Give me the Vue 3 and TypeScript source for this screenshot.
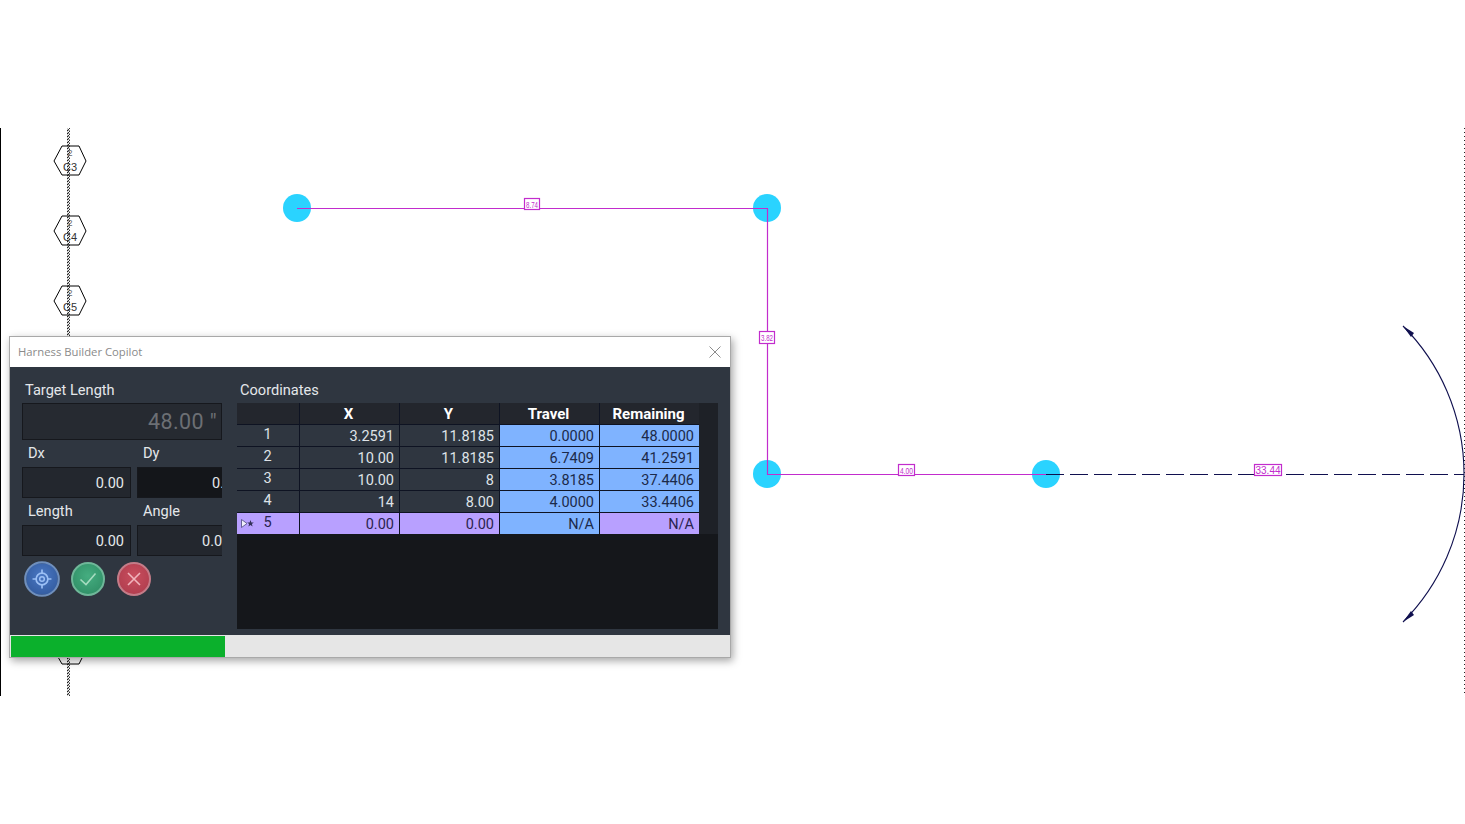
<script setup lang="ts">
interface Row { id: number; x: string; y: string; travel: string; remaining: string; active?: boolean }
const rows: Row[] = [
  { id: 1, x: '3.2591', y: '11.8185', travel: '0.0000', remaining: '48.0000' },
  { id: 2, x: '10.00', y: '11.8185', travel: '6.7409', remaining: '41.2591' },
  { id: 3, x: '10.00', y: '8', travel: '3.8185', remaining: '37.4406' },
  { id: 4, x: '14', y: '8.00', travel: '4.0000', remaining: '33.4406' },
  { id: 5, x: '0.00', y: '0.00', travel: 'N/A', remaining: 'N/A', active: true },
]
const hexes = [
  { cy: 161, label: 'C3' },
  { cy: 231, label: 'C4' },
  { cy: 301, label: 'C5' },
  { cy: 650, label: '' },
]
const hexPoints = (cy: number) =>
  `54,${cy} 62,${cy - 15} 79,${cy - 15} 86,${cy} 79,${cy + 14} 62,${cy + 14}`
const nodes = [
  { cx: 297, cy: 208 },
  { cx: 767, cy: 208 },
  { cx: 767, cy: 474 },
  { cx: 1046, cy: 474 },
]
const tags = [
  { x: 524.5, y: 198.5, w: 15, h: 11, t: '8.74', tx: 532, ty: 207.5, fs: 9, len: 12 },
  { x: 759.5, y: 331.5, w: 15, h: 12, t: '3.82', tx: 767, ty: 341, fs: 9, len: 12 },
  { x: 898.5, y: 464.5, w: 16, h: 11, t: '4.00', tx: 906.5, ty: 473.5, fs: 9, len: 13 },
  { x: 1254.5, y: 464.5, w: 27, h: 11, t: '33.44', tx: 1268, ty: 474, fs: 10, len: 25 },
]
</script>

<template>
  <div class="page">
    <svg class="drawing" width="1465" height="824" viewBox="0 0 1465 824">
      <defs>
        <pattern id="hatch" width="3" height="3" patternUnits="userSpaceOnUse">
          <path d="M0 2.7 L3 0.3" stroke="#111" stroke-width="1.1" />
        </pattern>
      </defs>
      <line x1="0.5" y1="128" x2="0.5" y2="696" stroke="#000" stroke-width="1" />
      <line x1="1464.5" y1="128" x2="1464.5" y2="694" stroke="#222" stroke-width="1" stroke-dasharray="1 3" />
      <rect x="67" y="128" width="3" height="568" fill="url(#hatch)" />
      <g v-for="h in hexes" :key="h.cy">
        <polygon :points="hexPoints(h.cy)" fill="none" stroke="#000" stroke-width="1" />
        <template v-if="h.label">
          <text x="70" :y="h.cy - 5" class="hex-mini">2</text>
          <text x="70" :y="h.cy + 10" class="hex-label">{{ h.label }}</text>
        </template>
      </g>

      <circle v-for="n in nodes" :key="n.cx + '-' + n.cy" :cx="n.cx" :cy="n.cy" r="14" fill="#2ad3ff" />
      <path d="M297 208.5 H767.5 V474.5 H1046" fill="none" stroke="#c22ccd" stroke-width="1.2" />
      <line x1="1046" y1="474.5" x2="1464" y2="474.5" stroke="#10104f" stroke-width="1.1" stroke-dasharray="18 6" />
      <path d="M1403 326 A210 210 0 0 1 1403 622" fill="none" stroke="#10104f" stroke-width="1.1" />
      <path d="M1403 326 L1414 333 L1411 337 Z" fill="#10104f" />
      <path d="M1403 622 L1414 615 L1411 611 Z" fill="#10104f" />

      <g v-for="tag in tags" :key="tag.t">
        <rect :x="tag.x" :y="tag.y" :width="tag.w" :height="tag.h" fill="#fff" stroke="#c22ccd" stroke-width="1.2" />
        <text
          :x="tag.tx"
          :y="tag.ty"
          :font-size="tag.fs"
          :textLength="tag.len"
          lengthAdjust="spacingAndGlyphs"
          class="tag-text"
        >{{ tag.t }}</text>
      </g>
    </svg>

    <section class="dialog">
      <header class="titlebar">
        <span class="title">Harness Builder Copilot</span>
        <svg class="close" width="12" height="12" viewBox="0 0 12 12">
          <path d="M0.5 0.5 L11.5 11.5 M11.5 0.5 L0.5 11.5" stroke="#8c8c8c" stroke-width="1" fill="none" />
        </svg>
      </header>

      <div class="body">
        <div class="left">
          <div class="label first">Target Length</div>
          <div class="target">48.00 "</div>
          <div class="fields">
            <div class="label">Dx</div>
            <div class="label">Dy</div>
            <div class="field">0.00</div>
            <div class="field focus clip-dy">0.00</div>
            <div class="label">Length</div>
            <div class="label">Angle</div>
            <div class="field">0.00</div>
            <div class="field clip-angle">0.00</div>
          </div>
          <div class="buttons">
            <button class="round blue" type="button" aria-label="Locate">
              <svg width="20" height="20" viewBox="0 0 20 20" fill="none" stroke="#9cc0f5">
                <circle cx="10" cy="10" r="5.6" stroke-width="1.6" />
                <circle cx="10" cy="10" r="2.2" stroke-width="1.4" />
                <path d="M10 1 V4.5 M10 15.5 V19 M1 10 H4.5 M15.5 10 H19" stroke-width="1.6" />
              </svg>
            </button>
            <button class="round green" type="button" aria-label="Accept">
              <svg width="20" height="20" viewBox="0 0 20 20" fill="none" stroke="#a6dcc0" stroke-width="1.6">
                <path d="M2.5 10.5 L8 15.5 L17.5 4.5" />
              </svg>
            </button>
            <button class="round red" type="button" aria-label="Cancel">
              <svg width="20" height="20" viewBox="0 0 20 20" fill="none" stroke="#f0b4bc" stroke-width="1.6">
                <path d="M4 4 L16 16 M16 4 L4 16" />
              </svg>
            </button>
          </div>
        </div>

        <div class="right">
          <div class="label first">Coordinates</div>
          <div class="table-wrap">
            <div class="grid">
              <div class="cell head"></div>
              <div class="cell head">X</div>
              <div class="cell head">Y</div>
              <div class="cell head">Travel</div>
              <div class="cell head">Remaining</div>
              <template v-for="r in rows" :key="r.id">
                <div class="cell rowhead" :class="{ active: r.active }">
                  <svg v-if="r.active" class="marker" width="13" height="9" viewBox="0 0 13 9">
                    <path d="M0.5 0.5 L6 4.5 L0.5 8.5 Z" fill="#f1f0fb" stroke="#4b4680" stroke-width="0.8" />
                    <path d="M9.5 1 L10.4 3.4 L12.8 3.4 L10.9 5 L11.6 7.6 L9.5 6 L7.4 7.6 L8.1 5 L6.2 3.4 L8.6 3.4 Z" fill="#33305a" />
                  </svg>
                  {{ r.id }}
                </div>
                <div class="cell num" :class="{ active: r.active }">{{ r.x }}</div>
                <div class="cell num" :class="{ active: r.active }">{{ r.y }}</div>
                <div class="cell num calc">{{ r.travel }}</div>
                <div class="cell num calc" :class="{ active: r.active }">{{ r.remaining }}</div>
              </template>
            </div>
            <div class="gutter"></div>
          </div>
        </div>
      </div>

      <div class="progress"><div class="bar" style="width: 214px"></div></div>
    </section>
  </div>
</template>

<style>
html, body { margin: 0; background: #fff; }
</style>

<style scoped>
.page {
  position: relative;
  width: 1465px;
  height: 824px;
  overflow: hidden;
  background: #fff;
  font-family: Roboto, "Liberation Sans", sans-serif;
}
.drawing { display: block; }
.hex-mini {
  font-family: "Liberation Sans", sans-serif;
  font-size: 9px;
  fill: #666;
  text-anchor: middle;
}
.hex-label {
  font-family: "Liberation Sans", sans-serif;
  font-size: 11px;
  fill: #333;
  text-anchor: middle;
}
.tag-text {
  font-family: "Liberation Sans", sans-serif;
  fill: #c22ccd;
  text-anchor: middle;
}
.dialog {
  position: absolute;
  left: 9px;
  top: 336px;
  width: 722px;
  height: 322px;
  box-sizing: border-box;
  border: 1px solid #a9a9a9;
  box-shadow: 2px 3px 8px rgba(0, 0, 0, 0.35);
  display: flex;
  flex-direction: column;
  background: #fff;
}
.titlebar {
  height: 30px;
  flex: none;
  display: flex;
  align-items: center;
  justify-content: space-between;
  padding: 0 9px 0 8px;
  background: #fff;
}
.title {
  font-family: "Open Sans", sans-serif;
  font-size: 11.3px;
  line-height: 30px;
  height: 30px;
  color: #8a8a8a;
}
.body {
  flex: 1;
  min-height: 0;
  display: flex;
  gap: 15px;
  padding: 13px 12px 6px;
  background: #2f3640;
}
.left { width: 200px; flex: none; display: flex; flex-direction: column; }
.right { flex: 1; min-width: 0; display: flex; flex-direction: column; }
.label {
  font-size: 14.6px;
  color: #e4e7ea;
  padding: 5px 0 0 6px;
  height: 27px;
  box-sizing: border-box;
  line-height: 17px;
}
.label.first { height: 23px; padding: 2px 0 0 3px; }
.target {
  height: 37px;
  box-sizing: border-box;
  background: #262a31;
  border: 1px solid #16181d;
  color: #6c6f74;
  font-size: 21.5px;
  text-align: right;
  line-height: 35px;
  padding-right: 4px;
  letter-spacing: 0.4px;
}
.fields {
  display: grid;
  grid-template-columns: 109px 85px;
  column-gap: 6px;
  grid-auto-rows: auto;
}
.field {
  height: 31px;
  box-sizing: border-box;
  background: #23272e;
  border: 1px solid #16181d;
  color: #e4e7ea;
  font-size: 14.5px;
  line-height: 31px;
  text-align: right;
  padding-right: 6px;
  white-space: nowrap;
  overflow: hidden;
}
.field.focus { background: #14161a; }
.clip-dy { text-align: left; padding: 0 0 0 74px; border-right: 0; }
.clip-angle { text-align: left; padding: 0 0 0 64px; border-right: 0; }
.buttons {
  display: flex;
  gap: 12px;
  margin-top: 6px;
  padding-left: 3px;
}
.round {
  width: 34px;
  height: 34px;
  padding: 0;
  border-radius: 50%;
  display: flex;
  align-items: center;
  justify-content: center;
  box-sizing: border-box;
  border-width: 2px;
  border-style: solid;
  filter: blur(0.4px);
}
.blue {
  background: radial-gradient(circle at 50% 40%, #4a78c4, #2e5596);
  border-color: #6f8fbc;
  transform: scale(1.05);
}
.green { background: radial-gradient(circle at 50% 40%, #45ad80, #2c8a62); border-color: #6fb799; }
.red { background: radial-gradient(circle at 50% 40%, #c94e5e, #ab3a4b); border-color: #c47c88; }
.round svg { display: block; }
.table-wrap {
  flex: 1;
  display: flex;
  align-items: flex-start;
  background: #15171b;
}
.grid {
  width: 462px;
  flex: none;
  display: grid;
  grid-template-columns: 62px 99px 99px 99px 99px;
  grid-auto-rows: 21px;
  gap: 1px;
  background: #0e1322;
}
.gutter { width: 19px; height: 131px; background: #1e2127; }
.cell {
  font-size: 14.5px;
  line-height: 21px;
  color: #dfe3e8;
  background: #2f3640;
  box-sizing: border-box;
  white-space: nowrap;
}
.head {
  background: #23262d;
  color: #fff;
  font-size: 15px;
  font-weight: 700;
  line-height: 22px;
  text-align: center;
  padding-right: 2px;
}
.rowhead {
  position: relative;
  text-align: center;
  line-height: 20px;
  padding-right: 1px;
}
.marker { position: absolute; left: 4px; top: 6px; }
.num { text-align: right; padding-right: 5px; line-height: 23px; }
.calc { background: #7fb3ff; color: #1c2a4a; }
.active { background: #b8a0ff; color: #2a2450; }
.progress {
  height: 22px;
  flex: none;
  box-sizing: border-box;
  padding: 1px 0 0 1px;
  background: #e6e6e6;
}
.bar { height: 100%; background: #0bb02c; }
.close { display: block; }
</style>
